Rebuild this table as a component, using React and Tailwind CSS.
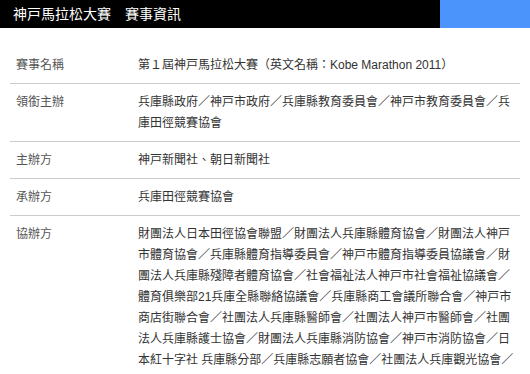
import React from 'react';

const rows = [
  { label: '賽事名稱', value: '第１屆神戸馬拉松大賽（英文名稱：Kobe Marathon 2011）' },
  { label: '領銜主辦', value: '兵庫縣政府／神戸市政府／兵庫縣教育委員會／神戸市教育委員會／兵庫田徑競賽協會' },
  { label: '主辦方', value: '神戸新聞社、朝日新聞社' },
  { label: '承辦方', value: '兵庫田徑競賽協會' },
  {
    label: '協辦方',
    value:
      '財團法人日本田徑協會聯盟／財團法人兵庫縣體育協會／財團法人神戸市體育協會／兵庫縣體育指導委員會／神戸市體育指導委員協議會／財團法人兵庫縣殘障者體育協會／社會福祉法人神戸市社會福祉協議會／體育俱樂部21兵庫全縣聯絡協議會／兵庫縣商工會議所聯合會／神戸市商店街聯合會／社團法人兵庫縣醫師會／社團法人神戸市醫師會／社團法人兵庫縣護士協會／財團法人兵庫縣消防協會／神戸市消防協會／日本紅十字社 兵庫縣分部／兵庫縣志願者協會／社團法人兵庫觀光協會／財團法人神戸國際觀光協會／神戸商工會議所',
  },
];

export default function App() {
  return (
    <div
      className="w-[530px] h-[374px] overflow-hidden bg-white"
      style={{ fontFamily: '"Liberation Sans", "Noto Sans CJK TC", sans-serif' }}
    >
      {/* Header bar */}
      <div className="flex h-[28px] bg-black">
        <div className="flex flex-1 items-center pl-[13px] text-[14px] text-white">
          神戸馬拉松大賽　賽事資訊
        </div>
        <div className="w-[90px] bg-[#4a94fb]" />
      </div>

      {/* Info table */}
      <div className="mx-[10px] mt-[19px]">
        {rows.map((row) => (
          <div
            key={row.label}
            className="grid grid-cols-[122px_1fr] border-b border-[#cccccc] pt-[8px] pb-[7px] text-[12px] leading-[21px]"
          >
            <div className="pl-[6px] text-[#555555]">{row.label}</div>
            <div className="px-[6px] text-[#333333]">{row.value}</div>
          </div>
        ))}
      </div>
    </div>
  );
}
